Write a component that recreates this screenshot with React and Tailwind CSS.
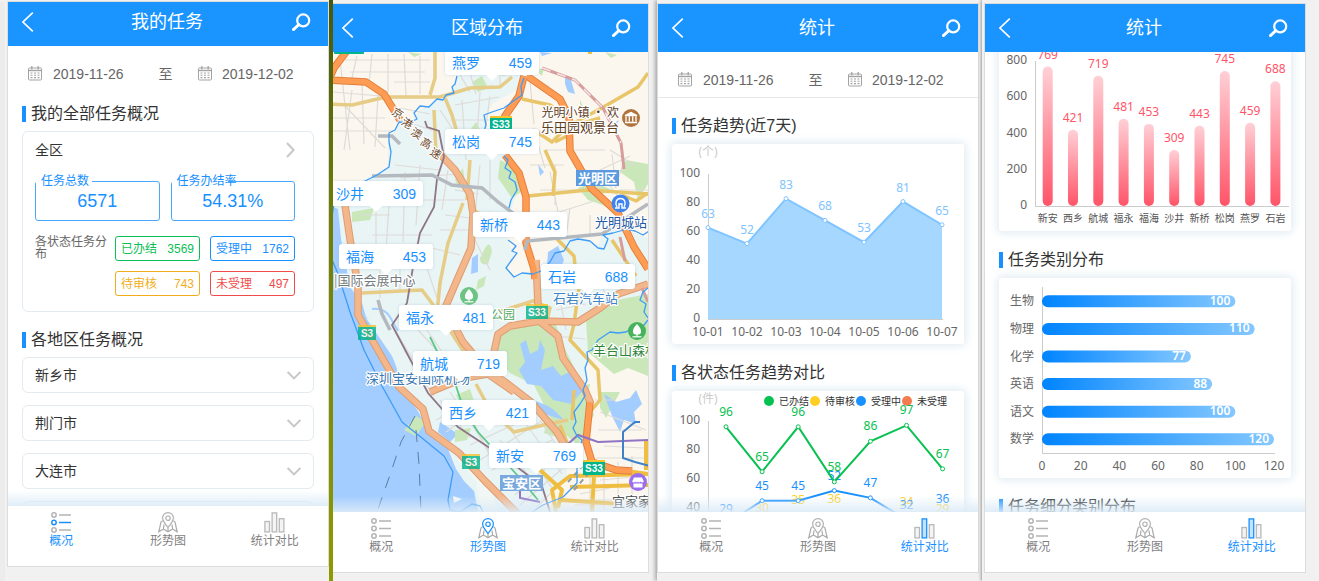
import React from "react";

const NUM = "font-['Noto_Sans','Noto_Sans_CJK_SC',sans-serif]";

/* ---------- icons ---------- */

function BackIcon() {
  return (
    <svg width="12" height="20" viewBox="0 0 12 20" fill="none" stroke="#fff" strokeWidth="1.6">
      <path d="M10.8 0.6 1 10l9.8 9.4" />
    </svg>
  );
}

function SearchIcon() {
  return (
    <svg width="19" height="18" viewBox="0 0 19 18" fill="none" stroke="#fff">
      <circle cx="11.2" cy="7.4" r="6" strokeWidth="2.2" />
      <path d="M6.8 11.6 1.4 16.6" strokeWidth="2.8" strokeLinecap="round" />
    </svg>
  );
}

function CalendarIcon() {
  return (
    <svg width="14" height="15" viewBox="0 0 14 15" fill="none" stroke="#a3a3a3" className="shrink-0">
      <rect x="0.5" y="2" width="13" height="12" rx="1" />
      <path d="M0.5 4.5h13" strokeWidth="1.4" />
      <path d="M3.8 0v3.4M10.2 0v3.4" strokeWidth="1.3" />
      <path d="M2.5 7h2M6 7h2M9.5 7h2M2.5 9.3h2M6 9.3h2M9.5 9.3h2M2.5 11.6h2M6 11.6h2M9.5 11.6h2" strokeWidth="1.1" />
    </svg>
  );
}

function ChevronRight() {
  return (
    <svg width="9" height="16" viewBox="0 0 9 16" fill="none" stroke="#c8c8c8" strokeWidth="2">
      <path d="M1 1l6.6 7L1 15" />
    </svg>
  );
}

function ChevronDown() {
  return (
    <svg width="14" height="9" viewBox="0 0 14 9" fill="none" stroke="#c8c8c8" strokeWidth="2">
      <path d="M0.6 1 7 7.4 13.4 1" />
    </svg>
  );
}

function ListIcon({ active }) {
  const mid = active ? "#1890ff" : "#b4b4b4";
  return (
    <svg width="20" height="21" viewBox="0 0 20 21" fill="none" strokeWidth="1.5">
      <g stroke="#b4b4b4">
        <circle cx="3" cy="3" r="2.2" />
        <circle cx="3" cy="18" r="2.2" />
        <path d="M8 3h12M8 18h12" />
      </g>
      <g stroke={mid}>
        <circle cx="3" cy="10.5" r="2.2" />
        <path d="M8 10.5h12" />
      </g>
    </svg>
  );
}

function SituationIcon({ active }) {
  const pin = active ? "#1890ff" : "#b0b0b0";
  return (
    <svg width="20" height="21" viewBox="0 0 20 21" fill="none" strokeWidth="1.2">
      <path
        d="M4.6 8.6 3 10 .8 19.8 5.4 17 10 19.8 14.6 17l4.6 2.8L17 10l-1.600-1.400M6 12.500 5.400 17M14 12.500l.6 4.500M10 15.500v4.300"
        stroke="#ababab"
      />
      <path d="M10 15.400C7 11.900 4.600 9.200 4.600 6a5.400 5.400 0 0 1 10.800 0c0 3.200-2.400 5.900-5.400 9.400Z" stroke={pin} />
      <circle cx="10" cy="6.2" r="2.2" stroke={pin} />
    </svg>
  );
}

function CompareIcon({ active }) {
  return (
    <svg width="21" height="21" viewBox="0 0 21 21" fill="none" strokeWidth="1.3" stroke="#b8b8b8">
      <rect x="0.9" y="9.500" width="4.600" height="10.400" fill="#f4f4f4" />
      <rect x="15.300" y="6.700" width="4.600" height="13.200" fill="#f4f4f4" />
      <rect x="8.100" y="0.900" width="4.600" height="19" stroke={active ? "#1890ff" : "#b8b8b8"} fill={active ? "#c4e2ff" : "#f4f4f4"} />
    </svg>
  );
}

/* ---------- phone shell ---------- */

const TABS = [
  { label: "概况", Icon: ListIcon },
  { label: "形势图", Icon: SituationIcon },
  { label: "统计对比", Icon: CompareIcon },
];

function Phone({ title, tab, compact, children }) {
  return (
    <section className="flex h-full min-w-0 flex-1 flex-col bg-white shadow-[0_0_0_1px_#dcdcdc]">
      <header className={`relative z-10 flex shrink-0 items-center justify-between bg-[#1a94ff] pl-3.5 pr-[17px] ${compact ? "h-11 pb-1" : "h-12"}`}>
        <button type="button" aria-label="返回" className="w-5">
          <BackIcon />
        </button>
        <h1 className="text-[18px] leading-6 text-white">{title}</h1>
        <button type="button" aria-label="搜索">
          <SearchIcon />
        </button>
      </header>
      <div className="relative min-h-0 flex-1 overflow-hidden">{children}</div>
      <nav className="relative z-10 grid h-[60px] shrink-0 grid-cols-3 bg-white">
        <div className="pointer-events-none absolute inset-x-0 bottom-full h-4 bg-linear-to-t from-[#dcebf7]/90 to-white/0" />
        {TABS.map(({ label, Icon }, i) => (
          <a
            key={label}
            href="#"
            aria-current={i === tab ? "page" : undefined}
            className={`flex flex-col items-center pt-1.5 text-xs leading-4 ${i === tab ? "text-[#1890ff]" : "text-[#7f7f7f]"}`}
          >
            <Icon active={i === tab} />
            {label}
          </a>
        ))}
      </nav>
    </section>
  );
}

function DateRange({ divided }) {
  const input = "w-20 min-w-0 bg-transparent text-sm leading-5 text-[#666] outline-none";
  return (
    <div className={`flex h-[46px] items-center justify-between border-b pl-5 pr-[26px] pt-2.5 ${divided ? "border-[#e8e8e8]" : "border-transparent"}`}>
      <label className="flex items-center gap-[11px]">
        <CalendarIcon />
        <input type="text" aria-label="开始日期" defaultValue="2019-11-26" className={input} />
      </label>
      <span className="text-sm leading-5 text-[#666]">至</span>
      <label className="flex items-center gap-2.5">
        <CalendarIcon />
        <input type="text" aria-label="结束日期" defaultValue="2019-12-02" className={input} />
      </label>
    </div>
  );
}

function SectionTitle({ children }) {
  return (
    <h2 className="flex items-center gap-[5px] pl-3.5 text-base leading-4 text-[#333]">
      <span className="h-4 w-1 bg-[#1890ff]" />
      {children}
    </h2>
  );
}

/* ---------- overview ---------- */

const STATUS = [
  ["已办结", 3569, "border-[#0bbf55] text-[#0bbf55]"],
  ["受理中", 1762, "border-[#1890ff] text-[#1890ff]"],
  ["待审核", 743, "border-[#f0ae1c] text-[#f0ae1c]"],
  ["未受理", 497, "border-[#f04b4b] text-[#f04b4b]"],
];

function Total({ label, value }) {
  return (
    <fieldset className="h-12 min-w-0 rounded-[3px] border border-[#4aa8ff] text-center text-[#1890ff]">
      <legend className="h-4 w-14 whitespace-nowrap pl-[5px] text-left text-xs leading-4">{label}</legend>
      <div className="leading-6 text-[18px]">{value}</div>
    </fieldset>
  );
}

function Overview() {
  return (
    <>
      <DateRange />
      <div className="pt-3.5">
        <SectionTitle>我的全部任务概况</SectionTitle>
        <div className="mx-3.5 mt-[9px] h-[181px] rounded-md border border-[#e2ebf1] px-3 pt-2">
          <button type="button" className="flex w-full items-center justify-between pr-1.5 text-sm leading-5 text-[#333]">
            全区
            <ChevronRight />
          </button>
          <div className="mt-[13px] grid grid-cols-2 gap-[11px] pr-1.5">
            <Total label="任务总数" value="6571" />
            <Total label="任务办结率" value="54.31%" />
          </div>
          <div className="mt-[15px] flex justify-between pr-1.5">
            <div className="w-[75px] text-xs leading-3 text-[#666]">各状态任务分布</div>
            <div className="grid w-[180px] grid-cols-2 gap-2.5">
              {STATUS.map(([name, n, tone]) => (
                <div key={name} className={`flex h-[25px] items-center justify-between rounded-[3px] border px-[5px] text-xs leading-4 ${tone}`}>
                  <span>{name}</span>
                  <span>{n}</span>
                </div>
              ))}
            </div>
          </div>
        </div>
      </div>
      <div className="pt-5">
        <SectionTitle>各地区任务概况</SectionTitle>
        <div className="mt-[9px] flex flex-col gap-3 px-3.5">
          {["新乡市", "荆门市", "大连市"].map((city) => (
            <button key={city} type="button" className="flex h-9 items-center justify-between rounded-md border border-[#e2ebf1] px-3 text-sm leading-5 text-[#333]">
              {city}
              <ChevronDown />
            </button>
          ))}
          <div className="h-9 rounded-md border border-[#e2ebf1]" />
        </div>
      </div>
    </>
  );
}

/* ---------- map ---------- */

const MARKERS = [
  ["燕罗", 459, "left-[117px] top-[-2px]"],
  ["松岗", 745, "left-[117px] top-[77px]"],
  ["沙井", 309, "left-[1px] top-[129px]"],
  ["新桥", 443, "left-[145px] top-[160px]"],
  ["福海", 453, "left-[11px] top-[192px]"],
  ["石岩", 688, "left-[213px] top-[212px]"],
  ["福永", 481, "left-[71px] top-[253px]"],
  ["航城", 719, "left-[85px] top-[299px]"],
  ["西乡", 421, "left-[114px] top-[348px]"],
  ["新安", 769, "left-[161px] top-[391px]"],
];

const MINOR = [
  "M333 118h52M333 131h60M340 60l10 90M352 90l-8 60M362 82l2 62M378 95l-3 52M333 92l48 4M345 106l40 42",
  "M345 60h85M350 72h75M357 56l-6 26M372 54l-3 30M388 54v38M404 54l2 42M420 56v38M394 82h36M400 108l30 6M400 120l32 10",
  "M455 66l15 26M468 66l8 28M455 105l44-8M450 120h40M462 100l4 60M480 92l-4 60M490 96l-4 30M500 66v20M440 110l20 30",
  "M395 165l45 5M400 178l60-4M395 200h70M390 190l-4 60M405 172l-2 70M420 165l-4 60M448 170l-6 40M455 190l24 4M480 165l-6 60M490 160v40M445 215l34 4M372 235h60M376 210v60M360 215h30M380 250l40 4",
  "M350 262h80M420 245l40 10M425 262l12 36M400 262v30M380 268v30M470 230l20 40M440 230h34",
  "M530 82l4 42M520 130l30 2M533 128l12 40M545 150h60M530 165h34M555 165v40M540 190h50M550 215l44-14M560 222l-10-50M590 215v20M570 208l-4 30",
  "M600 170l30-14M610 150l26 16M596 190l30-24M604 178l18 24M612 154l4 34M625 158l-10 30M633 215l15 8M620 190h28",
  "M545 265l50 8M560 300l6 30M556 310l30-6M545 335l40 4M590 265l16 30M600 300l-6 24",
  "M418 330l24 26M424 326l28 40M395 330l30 50M404 350l30 46M440 400l30 38M450 392l40 60M462 400l30 60M436 420l34-18M446 432l40-28",
  "M470 445l60-28M480 460l60-38M492 470l60-30M500 440l40 50M512 432l40 56M526 424l36 50M540 420l26 40M515 495l30-26M520 505l42-36M536 508l30-30",
  "M595 400h20M600 412l46 18M598 430h44M604 446l40 2M596 458h50M600 480l44-4M574 478l24-10M580 494l30-6M590 470v40M604 462v48M618 462v48M632 456v50M570 500h40M610 500h38M574 505h30",
];

const HALO = { stroke: "#fff", strokeWidth: 2.5, paintOrder: "stroke", strokeLinejoin: "round" };

function Shield({ x, y, w, faded, children }) {
  return (
    <g opacity={faded ? 0.8 : 1}>
      <rect x={x} y={y} width={w} height="15" fill="#00b48c" />
      <rect x={x} y={y} width={w} height="2" fill="#f4c430" />
      <text x={x + w / 2} y={y + 12} fontSize="10" fontWeight="bold" fill="#fff" textAnchor="middle">
        {children}
      </text>
    </g>
  );
}

function Tree({ x, y, faded }) {
  return (
    <g transform={`translate(${x} ${y})`} opacity={faded ? 0.75 : 1}>
      <circle r="9" fill="#44b35c" />
      <path d="M0-7c3 3 4.600 6 4 8.400-.5 1.600-2 2.200-3.400 2.200V5.400h-1.200V3.600C-2 3.600-3.500 3-4 1.400-4.600-1-3-4 0-7Z" fill="#fff" />
      <path d="M-4.500 5.800h9" stroke="#fff" strokeWidth="1.200" />
    </g>
  );
}

function MapDrawing() {
  return (
    <svg viewBox="328 52 320 460" preserveAspectRatio="xMidYMin slice" className="block h-full w-full" role="img" aria-label="区域地图">
      <rect x="328" y="52" width="320" height="480" fill="#fcf7ee" />
      {/* district tint */}
      <path
        d="M457 52V76l-4 17-15 7-18 10-12 13h-10l-10 20v24l-23 13-37 12V532H518l27-34 22-18V455l16-20-3-25 6-25 2-33 8-7 12-12 32-3 5-10-4-20 7-12V238l-28-11-17 5-5 13-18-8-18 3-9 10-8 12-15 9-17 6-6-9 8-15-8-13 4-30 7-20-10-22-3-13-15-20-5-14 7-17 28-16 4-22V52Z"
        fill="#e9f4f5"
      />
      {/* sea */}
      <path
        d="M328 205l10 4 3 30 9 48 12 16 4 14 12 8 10 20 8 20 4 16 8 16 10 14 10 20 14 8 6 10 8 20 8 12 10 10 4 20 8 20H328Z"
        fill="#a3cdff"
      />
      <path d="M366 318l14 4 30 42 40 46-8 2-36-22-14-34Z" fill="#e9f4f5" />
      <path d="M372 309q12-2 18 8l8 14" fill="none" stroke="#a3cdff" strokeWidth="2" />
      <path d="M440 422l18 12-8 8-12-10Z" fill="#a3cdff" />
      <path d="M453 496l9 3-8 4ZM462 450l12 16 14 14 10 32H480l-4-30-18-22Z" fill="#f1f7f4" />
      {/* parks */}
      <g fill="#c9e7b9">
        <path d="M496 345l6-16 14-8 40 4 10 26 20 40 8 24-16 30-24-20-20-40-24-12-12-14Z" />
        <path d="M586 320l20-18 42-8V376l-20-8-14 6-26-22Z" />
        <path d="M484 250q6-12 8 2l-4 12q-8 2-8-6ZM478 280l8-4-2 10-8 4ZM404 430l12-14 10 6-10 14ZM546 425q8-8 18 2l-8 10-12-4ZM470 130l6-8 8 14-6 8-8-2ZM472 82l10-6 6 12-10 4ZM455 180l8-12 2 14-6 6ZM500 160l20 10 4 20-12 8-14-20Z" />
        <path d="M578 188l16-6 18 8-14 6 8 10-18-6ZM626 160l22 4v20l-10 16-4-18-14-10ZM500 66l14-2-2 10-10 2ZM408 52l14 2-8 3ZM605 52l12 3-6 3ZM404 120h5v4h-5ZM352 212l22-4-4 12-18 2ZM600 392h20l-14 26-6-10ZM570 388l20-4-4 20-14 6ZM580 100l4 8-4 2ZM536 70l8-2-2 8Z" />
        <path d="M456 395l14-6 4 12-10 10ZM455 430l16-2-4 12-12 2Z" />
      </g>
      {/* lakes */}
      <g fill="#a3cdff">
        <path d="M520 344l6-4 4 14 8-4 2-10 5 10-4 20 12-4 8 10 12-6 14 16-16 18-18-4-12-14-14-2-8-14 6-8Z" />
        <path d="M604 394l12 8 14-4 6-8 6 14-8 8 2 12-12-4-4 12-8-16Z" />
        <path d="M472 258l6-4v18l-7 2ZM548 252l10-6 6 14-4 10-14 8ZM565 76l6 4 4 14-7-2-3-8ZM614 123l5-3-3 6ZM540 52l12 1-10 3ZM538 164l6 8-4 4Z" />
        <path d="M520 398q20 2 34 12l10 10-20-6Z" />
      </g>
      {/* local streets */}
      <g fill="none" stroke="#dedbd8" strokeWidth="1.200">
        {MINOR.map((d) => (
          <path key={d} d={d} />
        ))}
      </g>
      {/* secondary roads */}
      <g fill="none" stroke="#e9c569" strokeWidth="3.500" strokeLinejoin="round">
        <path d="M328 104l24 1 34-8h54l30-9 30-1 12-10M435 52v26l-5 17M445 98l7 17 4 14 6 25M434 110l2 44M470 160l-3 40" stroke="#e6cc86" />
        <path d="M522 99l28 6 24 18 26-14 38-22 10-14M534 130l18 12 14-14 34-10M545 150l10 22-2 24M528 196l60-6 60 4M555 142l12-6" />
        <path d="M463 203l-15 40-8 40-3 30M362 293l60-3 12 16 30 46 8 24M470 205q10 14 20 8M476 384l14 26 24 22 34-8 20-4M536 300l-50 16M534 302l16 6-4 16" stroke="#e6cc86" />
        <path d="M556 238l18 18 2 20M580 280l-6 44-4 16 28 30 2 30-10 12M560 425l8 20M574 390l-2 30" />
        <path d="M556 512l-4-22 18-14 78-2M570 487l78-2M594 476l-2 36M560 500l60 4M646 440v30M620 470l28 4M540 470l22 20-4 18M588 52l4 0" strokeWidth="4" stroke="#efbd3f" />
        <path d="M622 195l14 6 12-8M612 240l24 36" />
      </g>
      {/* expressways, case then fill */}
      {[
        ["#e27f3c", 7.5, "#dd9c70"],
        ["#ff9c54", 5.5, "#f3b78b"],
      ].map(([bright, w, soft]) => (
        <g key={w} fill="none" strokeWidth={w} strokeLinejoin="round">
          <g stroke={soft}>
            <path d="M438 152l17 18 15 24 3 20-2 34-14 32-12 28 18 34 22 26 20 14 26 20 26 30 14 24" />
            <path d="M345 205l5 34 8 46v30l17 30 24 42 24 22 6 22 30 22 26 28 32 32" />
            <path d="M494 352l4-18 12-8 30-5 38 1 22-14 18-14 30-10M538 320l20 16 5 22 22 32 6 14" />
            <path d="M430 392l34-14 24-4 26 18" />
            <path d="M536 260l2 44 4 18" />
          </g>
          <g stroke={bright}>
            <path d="M328 80l38 2 18 12 16 26M328 82l6-14 12-16" />
            <path d="M527 76l33 23 9 18 1 34 22 38 26 24 16 34 14 22" />
            <path d="M524 76l-5 20-14 20-7 16M505 155l14 18 7 24v46l8 26 1 10" />
            <path d="M590 402l-4 40 6 20 24 8 16 1" />
          </g>
        </g>
      ))}
      {/* railways */}
      <g fill="none">
        <path d="M425 121l2 6 12 4 5 26-7 22-3 28-14 26-7 34-6 36-15 22 18 34 18 34 30 34 50 33 34 26 8 26" stroke="#8e7684" strokeWidth="1.800" />
        <path d="M372 176l60-1 20 10 30 3 16 14 30 22M525 250l2-9 75-7 46-30M378 136l14 0 8 8M378 300l4 14 8 16" stroke="#b3b9be" strokeWidth="3.500" />
        <path d="M542 68l33 12 28 28 18 35 3 26M620 237l5 24M642 288l6 14" stroke="#d79c9c" strokeWidth="3" />
        <path d="M542 68l33 12 28 28 18 35" stroke="#f4e4e2" strokeWidth="1.500" strokeDasharray="9 7" />
        <path d="M430 337l8 16M456 386l8 24 14 22 40 44 20 24" stroke="#5cc88a" strokeWidth="1.800" />
        <path d="M568 444l10-9 20 7 50-2M520 490v8l20 4" stroke="#8f74c4" strokeWidth="2" />
        <path d="M640 422h-5l-12 10v26l12 4 15 4" stroke="#3d82c9" strokeWidth="2" />
        <path d="M568 482l20-22M574 490l14-16" stroke="#9a9a9a" strokeWidth="2" strokeDasharray="5 4" />
      </g>
      {/* shipping lanes */}
      <path d="M415 416l-14 26-10 30-14 40M416 430l3 34 2 48" fill="none" stroke="#5b7da6" strokeDasharray="12 10" />
      {/* district boundary */}
      <g fill="none" stroke="#3d9cf7" strokeWidth="1.300" strokeLinejoin="round">
        <path d="M457 76l-2 8-3 3 2 6-8 2-3 5-6-1-8 8-9-1-6 7 3 6-8 4-10-1-4 8-6 3 0 9 2 10-2 15-12 8-12 6-38 12" />
        <path d="M524 78l-3 8 1 9-10 7-8 6-12 4-8 3 2 10-2 6 6 8M504 156l4 4-3 8 6 4-2 6 6 4 2 8-6 10-2 8M508 240l8 6-4 5 5 2-6 8-5 7 8 9 8-4 11 1 8-3 9-9 5-9 9-2 6-10 8-2 12 2 8 7 6 1 4-10-5-4 10-2 14-4 8 2 8 4 6-4 6 5" />
        <path d="M648 288l-5 4-3 8 6 4-2 8 4 6M648 320l-8 10-8-2-6 4-8 1-8-1-12 8-6 10-5 2 1 8-3 8 2 12-4 10 2 6-5 8-6 8 2 10-3 6 4 8 5 4-3 10-2 12v21l-14 14-20 8-18 12" />
        <path d="M328 250l10 24 12 38 14 38 18 36 20 36 20 16 22 18 9 16-5 28 2 10 10 2 12-8 8 2 6 12M328 240l6-36" />
      </g>
      {/* place names */}
      <g fontFamily="'Noto Sans CJK SC', sans-serif" fontSize="13">
        <g fill="#6b4a2c" fontSize="11" {...HALO}>
          {["京", "港", "澳", "高", "速"].map((c, i) => (
            <text key={c} transform={`translate(${391 + i * 9.500} ${114 + i * 10}) rotate(30)`}>
              {c}
            </text>
          ))}
        </g>
        <g fill="#5d3c1e" {...HALO}>
          <text x="619" y="117" textAnchor="end" fontSize="12">光明小镇 · 欢</text>
          <text x="619" y="132" textAnchor="end">乐田园观景台</text>
        </g>
        <text x="595" y="227" fill="#2457a4" {...HALO}>光明城站</text>
        <text x="334" y="285" fill="#737b80" {...HALO}>|国际会展中心</text>
        <text x="553" y="303" fill="#3f84c4" {...HALO}>石岩汽车站</text>
        <text x="491" y="319" fontSize="12" fill="#55a862" {...HALO}>公园</text>
        <text x="366" y="383" fill="#3a78b4" {...HALO}>深圳宝安国际机场</text>
        <text x="593" y="355" fill="#2c8436" {...HALO}>羊台山森林</text>
        <text x="612" y="506" fill="#444" {...HALO}>宜家家</text>
        <rect x="576" y="170" width="43" height="16" fill="#5c9ae0" />
        <text x="597.500" y="183" textAnchor="middle" fontWeight="bold" fill="#fff">光明区</text>
        <rect x="500" y="475" width="43" height="16" fill="#7aa9de" />
        <text x="521.500" y="488" textAnchor="middle" fontWeight="bold" fill="#fff">宝安区</text>
      </g>
      <g fontFamily="'Liberation Sans', sans-serif">
        <rect x="334" y="48" width="30" height="6" rx="1" fill="#00b48c" />
        <Shield x={490} y={116} w={22}>S33</Shield>
        <Shield x={526} y={304} w={22} faded>S33</Shield>
        <Shield x={583} y={460} w={22}>S33</Shield>
        <Shield x={358} y={325} w={18} faded>S3</Shield>
        <Shield x={462} y={454} w={18} faded>S3</Shield>
      </g>
      <Tree x={469} y={296} faded />
      <Tree x={637} y={331} />
      <g transform="translate(631 118)">
        <circle r="9" fill="#b0753f" />
        <path d="M-6-2.500 0-5.500l6 3ZM-5-1.500v5M-1.700-1.500v5M1.700-1.500v5M5-1.500v5M-6 4.500H6" stroke="#fff" strokeWidth="1.300" fill="#fff" />
      </g>
      <g transform="translate(620.500 203.500)">
        <circle r="9" fill="#3f84f0" />
        <path d="M-3.500 3.500C-6-1-4-5 0-5S6-1 3.500 3.500M-5.500 4.500h4V.500h3v4h4" stroke="#fff" strokeWidth="1.400" fill="none" />
      </g>
      <g transform="translate(638 482)">
        <circle r="9" fill="#9a6ef0" />
        <path d="M-4-4.500h8l1.800 4q-1.500 1.800-3 0-1.400 1.800-2.800 0-1.400 1.800-2.800 0-1.500 1.800-3 0ZM-4.500 1.500v4h9v-4" fill="#fff" />
      </g>
    </svg>
  );
}

function SituationMap() {
  return (
    <div className="relative h-full">
      <MapDrawing />
      {MARKERS.map(([name, n, place]) => (
        <button
          key={name}
          type="button"
          className={`absolute flex h-[25px] w-[94px] items-center justify-between rounded-[3px] bg-white px-[7px] text-sm leading-5 text-[#1890ff] shadow-[0_0_3px_rgba(120,170,200,0.35)] ${place}`}
        >
          <span>{name}</span>
          <span>{n}</span>
          <svg width="12" height="6" viewBox="0 0 12 6" className="absolute left-[41px] top-full" fill="#fff">
            <path d="M0 0h12L6 6Z" />
          </svg>
        </button>
      ))}
    </div>
  );
}

/* ---------- charts ---------- */

function ChartCard({ label, children }) {
  return (
    <div className="mx-3.5 rounded-[3px] bg-white shadow-[0_0_10px_2px_#e0ebf2]">
      <svg viewBox="0 0 292 200" role="img" aria-label={label} className={`block w-full ${NUM}`} fontSize="12">
        {children}
      </svg>
    </div>
  );
}

function YAxis({ ticks }) {
  const step = 145 / (ticks.length - 1);
  return (
    <g>
      <path d="M36.500 30V175" stroke="#ccc" />
      {ticks.map((t, i) => (
        <text key={t} x="28" y={178 - i * step} textAnchor="end" fill="#666">
          {t}
        </text>
      ))}
    </g>
  );
}

const TREND = [63, 52, 83, 68, 53, 81, 65];
const yOf = (v) => 175 - v * 1.45;

function TrendChart() {
  const pts = TREND.map((v, i) => [36 + i * 39, yOf(v)]);
  const line = pts.map((p) => p.join(" ")).join("L");
  return (
    <ChartCard label="任务趋势">
      <text x="36" y="12" textAnchor="middle" fill="#ccc">(个)</text>
      <YAxis ticks={[0, 20, 40, 60, 80, 100]} />
      <path d={`M36 175L${line}L270 175Z`} fill="#a6d7ff" />
      <path d={`M${line}`} fill="none" stroke="#80c4ff" strokeWidth="2" />
      <path d="M36 175.500H271" stroke="#ccc" />
      {pts.map(([x, y], i) => (
        <g key={x}>
          <circle cx={x} cy={y} r="2" fill="#fff" stroke="#80c4ff" />
          <text x={x} y={y - 10} textAnchor="middle" fill="#80c4ff">
            {TREND[i]}
          </text>
          <text x={x} y="192" textAnchor="middle" fill="#666">
            10-0{i + 1}
          </text>
        </g>
      ))}
    </ChartCard>
  );
}

const SERIES = [
  ["未受理", "#f57c50", []],
  ["待审核", "#fdd023", [null, 30, 35, 36, null, 34, 29]],
  ["受理中", "#1890ff", [29, 45, 45, 52, 47, 32, 36]],
  ["已办结", "#07c150", [96, 65, 96, 58, 86, 97, 67]],
];
const LEGEND = [SERIES[3], SERIES[1], SERIES[2], SERIES[0]];

function StatusChart() {
  return (
    <ChartCard label="各状态任务趋势对比">
      <text x="36" y="12" textAnchor="middle" fill="#ccc">(件)</text>
      {LEGEND.map(([name, color], i) => (
        <g key={name}>
          <circle cx={97 + i * 46} cy="10" r="5" fill={color} />
          <text x={107 + i * 46} y="13.500" fontSize="10" fill="#333">
            {name}
          </text>
        </g>
      ))}
      <YAxis ticks={[0, 20, 40, 60, 80, 100]} />
      {SERIES.map(([name, color, data]) => {
        const pts = data.map((v, i) => [54 + i * 36.1, yOf(v ?? 20), v]);
        return (
          <g key={name}>
            {pts.length > 0 && (
              <path d={`M${pts.map(([x, y]) => `${x} ${y}`).join("L")}`} fill="none" stroke={color} strokeWidth="2" />
            )}
            {pts.map(([x, y, v]) => (
              <g key={x}>
                <circle cx={x} cy={y} r="2" fill="#fff" stroke={color} />
                {v !== null && (
                  <text x={x} y={y - 11} textAnchor="middle" fill={color}>
                    {v}
                  </text>
                )}
              </g>
            ))}
          </g>
        );
      })}
    </ChartCard>
  );
}

const DISTRICTS = [
  ["新安", 769],
  ["西乡", 421],
  ["航城", 719],
  ["福永", 481],
  ["福海", 453],
  ["沙井", 309],
  ["新桥", 443],
  ["松岗", 745],
  ["燕罗", 459],
  ["石岩", 688],
];

function DistrictChart() {
  return (
    <ChartCard label="各区域任务数">
      <defs>
        <linearGradient id="rose" x1="0" y1="0" x2="0" y2="1">
          <stop offset="0" stopColor="#ffd0d6" />
          <stop offset="1" stopColor="#ff5468" />
        </linearGradient>
      </defs>
      <YAxis ticks={[0, 200, 400, 600, 800]} />
      <path d="M36 175.500H290" stroke="#ccc" />
      {DISTRICTS.map(([name, n], i) => {
        const x = 48.7 + i * 25.3;
        const h = (n * 145) / 800;
        return (
          <g key={name}>
            <rect x={x - 5} y={175 - h} width="10" height={h} rx="5" fill="url(#rose)" />
            <text x={x} y={167 - h} textAnchor="middle" fill="#ff5468">
              {n}
            </text>
            <text x={x} y="191" fontSize="10" textAnchor="middle" fill="#555">
              {name}
            </text>
          </g>
        );
      })}
    </ChartCard>
  );
}

const CATEGORIES = [
  ["生物", 100],
  ["物理", 110],
  ["化学", 77],
  ["英语", 88],
  ["语文", 100],
  ["数学", 120],
];

function CategoryChart() {
  return (
    <ChartCard label="任务类别分布">
      <defs>
        <linearGradient id="sky">
          <stop offset="0" stopColor="#0084ff" />
          <stop offset="1" stopColor="#85c8ff" />
        </linearGradient>
      </defs>
      <path d="M43.500 9V175.500H276" fill="none" stroke="#ccc" />
      {CATEGORIES.map(([name, n], i) => {
        const y = 23.3 + i * 27.6;
        const w = (n * 232) / 120;
        return (
          <g key={name}>
            <text x="35" y={y + 4} textAnchor="end" fill="#666">
              {name}
            </text>
            <rect x="43" y={y - 6} width={w} height="12" rx="6" fill="url(#sky)" />
            <text x={38 + w} y={y + 3.5} textAnchor="end" fontWeight="600" fill="#fff">
              {n}
            </text>
          </g>
        );
      })}
      {[0, 20, 40, 60, 80, 100, 120].map((t) => (
        <text key={t} x={43 + (t * 232) / 120} y="192" textAnchor="middle" fill="#666">
          {t}
        </text>
      ))}
    </ChartCard>
  );
}

/* ---------- page ---------- */

export default function App() {
  return (
    <main className="grid h-screen grid-cols-[333fr_324fr_325fr_337fr] grid-rows-1 overflow-hidden bg-[#f1f1f1] font-['Liberation_Sans','Noto_Sans_CJK_SC',sans-serif]">
      <div className="flex min-w-0 pt-0.5">
        <div className="mr-px flex min-w-0 flex-1 border-l-[5px] border-[#ececec] pb-[15px] pl-[3px]">
          <Phone title="我的任务" tab={0} compact>
            <Overview />
          </Phone>
        </div>
        <div className="-mt-0.5 w-1 bg-linear-to-b from-[#46580c] via-[#6f7c06] via-35% to-[#8f9a00]" />
      </div>
      <div className="flex min-w-0 overflow-hidden pb-[9px] pr-[9px] pt-1">
        <div className="-ml-[5px] flex min-w-0 flex-1">
          <Phone title="区域分布" tab={1}>
            <SituationMap />
          </Phone>
        </div>
      </div>
      <div className="flex min-w-0 pb-[9px] pl-px pr-1 pt-1 shadow-[-2px_0_4px_#a8a8a8]">
        <Phone title="统计" tab={2}>
          <DateRange divided />
          <div className="flex flex-col gap-[21px] pt-5">
            <div className="flex flex-col gap-2.5">
              <SectionTitle>任务趋势(近7天)</SectionTitle>
              <TrendChart />
            </div>
            <div className="flex flex-col gap-2.5">
              <SectionTitle>各状态任务趋势对比</SectionTitle>
              <StatusChart />
            </div>
          </div>
        </Phone>
      </div>
      <div className="flex min-w-0 bg-[#f1f1f1] pb-[9px] pl-[3px] pr-3.5 pt-1 shadow-[-1px_0_3px_#999]">
        <Phone title="统计" tab={2}>
          <div className="-mt-[21px] flex flex-col gap-[21px]">
            <DistrictChart />
            <div className="flex flex-col gap-2.5">
              <SectionTitle>任务类别分布</SectionTitle>
              <CategoryChart />
            </div>
            <SectionTitle>任务细分类别分布</SectionTitle>
          </div>
        </Phone>
      </div>
    </main>
  );
}
